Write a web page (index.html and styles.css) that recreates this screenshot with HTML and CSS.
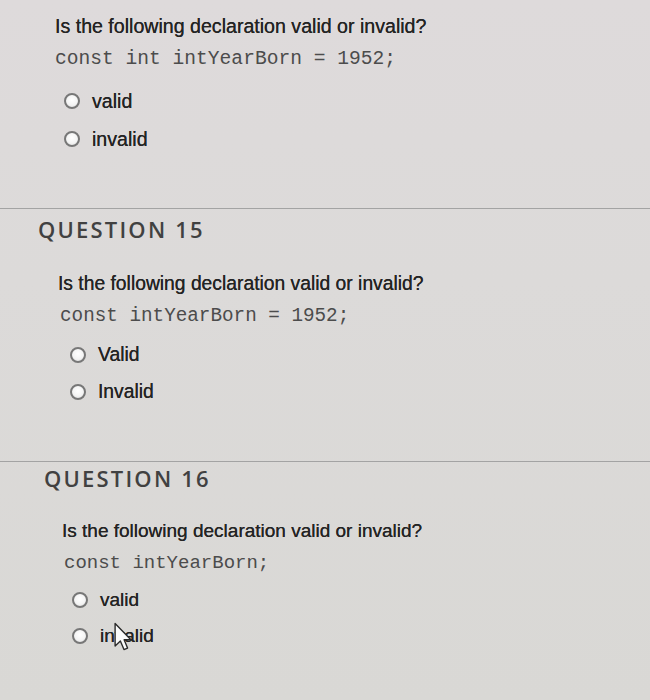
FILE: index.html
```html
<!DOCTYPE html>
<html lang="en">
<head>
<meta charset="utf-8">
<title>Quiz</title>
<link rel="stylesheet" href="styles.css">
</head>
<body>
<main class="page">
  <section class="q q1">
    <p class="prompt">Is the following declaration valid or invalid?</p>
    <p class="code">const int intYearBorn = 1952;</p>
    <ul class="opts">
      <li class="opt"><span class="radio"></span><span class="label">valid</span></li>
      <li class="opt"><span class="radio"></span><span class="label">invalid</span></li>
    </ul>
  </section>
  <section class="q q2">
    <h2 class="title">QUESTION 15</h2>
    <div class="body">
      <p class="prompt">Is the following declaration valid or invalid?</p>
      <p class="code">const intYearBorn = 1952;</p>
      <ul class="opts">
        <li class="opt"><span class="radio"></span><span class="label">Valid</span></li>
        <li class="opt"><span class="radio"></span><span class="label">Invalid</span></li>
      </ul>
    </div>
  </section>
  <section class="q q3">
    <h2 class="title">QUESTION 16</h2>
    <div class="body">
      <p class="prompt">Is the following declaration valid or invalid?</p>
      <p class="code">const intYearBorn;</p>
      <ul class="opts">
        <li class="opt"><span class="radio"></span><span class="label">valid</span></li>
        <li class="opt"><span class="radio"></span><span class="label">invalid</span>
          <svg class="cursor" viewBox="0 0 13 21" width="18" height="30" aria-hidden="true">
            <path d="M0.8 0.8 L0.8 17 L4.6 13.4 L7.2 19.6 L9.8 18.5 L7.3 12.5 L12.2 12.5 Z" fill="#fbfbfb" stroke="#2a2a2a" stroke-width="1" stroke-linejoin="round"/>
          </svg>
        </li>
      </ul>
    </div>
  </section>
</main>
</body>
</html>
```
FILE: styles.css
```css
* { box-sizing: border-box; }

html, body {
  margin: 0;
  padding: 0;
}

body {
  width: 650px;
  height: 700px;
  overflow: hidden;
  background: linear-gradient(180deg, #dedadb 0%, #dcdad9 40%, #d9d8d5 100%);
  font-family: "Liberation Sans", Arial, sans-serif;
  color: #242424;
}

.page {
  display: flex;
  flex-direction: column;
}

.q {
  display: flex;
  flex-direction: column;
  border-bottom: 1px solid #a3a3a3;
}

.q p, .q h2, .q ul { margin: 0; }

.prompt {
  line-height: 24px;
  font-size: var(--fs);
  color: #242424;
  text-shadow: 0 0 0.4px #242424;
  white-space: nowrap;
}

.code {
  line-height: 24px;
  font-family: "Liberation Mono", "Courier New", monospace;
  font-size: var(--fs);
  color: #4c4c4c;
  white-space: pre;
}

.opts {
  list-style: none;
  padding: 0;
  display: flex;
  flex-direction: column;
}

.opt {
  position: relative;
  display: flex;
  align-items: center;
  height: 24px;
  font-size: var(--fs);
  color: #242424;
  text-shadow: 0 0 0.4px #242424;
}

.radio {
  width: 16px;
  height: 16px;
  border-radius: 50%;
  border: 2px solid #777777;
  background: radial-gradient(circle at 50% 40%, #ffffff 0%, #f4f4f4 55%, #dadada 100%);
  margin-right: 12px;
  flex: none;
}

.title {
  line-height: 24px;
  font-family: "Open Sans", "Liberation Sans", sans-serif;
  font-weight: 600;
  font-size: 22px;
  letter-spacing: 2.2px;
  color: #414141;
}

.body {
  display: flex;
  flex-direction: column;
  margin-left: 20px;
}

.cursor {
  position: absolute;
  left: 42px;
  top: -2px;
}

/* question 14 (top, header scrolled off) */
.q1 {
  --fs: 19.6px;
  padding: 14px 0 57px 55px;
}
.q1 .code { margin-top: 9px; }
.q1 .opts { margin-top: 18px; margin-left: 9px; gap: 14px; }

/* question 15 */
.q2 {
  --fs: 19.3px;
  padding: 8px 0 57px 38px;
}
.q2 .prompt { margin-top: 31px; }
.q2 .code { margin-top: 8px; margin-left: 2px; }
.q2 .opts { margin-top: 15px; margin-left: 12px; gap: 13px; }

/* question 16 */
.q3 {
  --fs: 19px;
  padding: 4px 0 80px 44px;
  border-bottom: none;
}
.q3 .body { margin-left: 18px; }
.q3 .prompt { margin-top: 29px; }
.q3 .code { margin-top: 8px; margin-left: 2px; }
.q3 .opts { margin-top: 13px; margin-left: 10px; gap: 12px; }
```
